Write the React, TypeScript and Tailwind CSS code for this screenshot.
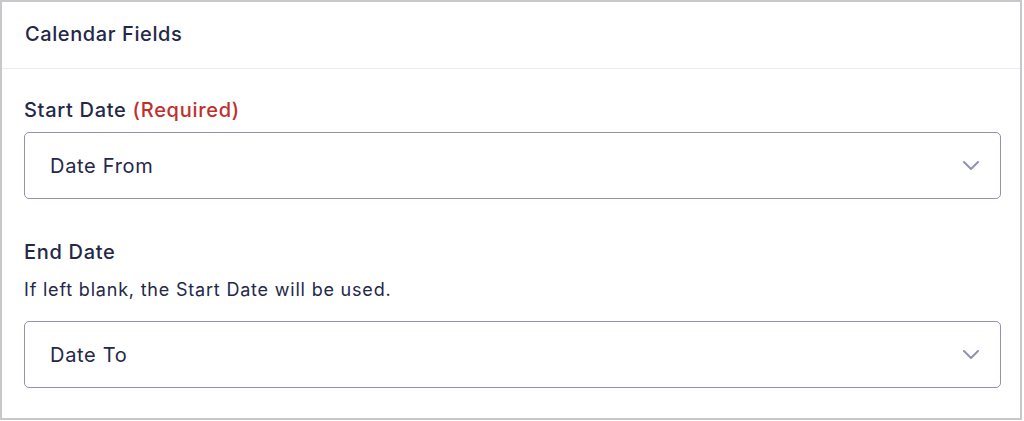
import React from 'react';

const Chevron: React.FC = () => (
  <svg width="16" height="9" viewBox="0 0 16 9" fill="none" className="shrink-0">
    <path d="M1 1l7 7 7-7" stroke="#9092b2" strokeWidth="2" strokeLinecap="round" strokeLinejoin="round" />
  </svg>
);

const SelectBox: React.FC<{ value: string }> = ({ value }) => (
  <div className="flex h-[67px] w-[977px] items-center justify-between rounded-[5px] border border-[#9092b2] pl-[25px] pr-[21px]">
    <span className="text-[20px] tracking-[0.7px] text-[#242748]">{value}</span>
    <Chevron />
  </div>
);

const App: React.FC = () => {
  return (
    <div className="h-[421px] w-[1024px] bg-white font-['Inter',sans-serif]">
      <div className="flex h-[420px] w-[1022px] flex-col border-2 border-[#c8c8cc]">
        <div className="flex h-[67px] items-center border-b border-[#ebebf2] pb-[2px] pl-[23px]">
          <h2 className="text-[20px] font-medium tracking-[0.6px] text-[#242748]">Calendar Fields</h2>
        </div>
        <div className="flex flex-col px-[22px] pt-[28px]">
          <label className="mb-[9px] text-[20px] font-medium leading-[26px] tracking-[0.7px] text-[#242748]">
            Start Date <span className="text-[#c22f2b]">(Required)</span>
          </label>
          <SelectBox value="Date From" />
          <label className="mt-[40px] text-[20px] font-medium leading-[26px] tracking-[0.7px] text-[#242748]">End Date</label>
          <p className="mt-[13px] text-[18px] leading-[24px] tracking-[0.8px] text-[#242748]">If left blank, the Start Date will be used.</p>
          <div className="mt-[19px]">
            <SelectBox value="Date To" />
          </div>
        </div>
      </div>
    </div>
  );
};

export default App;
